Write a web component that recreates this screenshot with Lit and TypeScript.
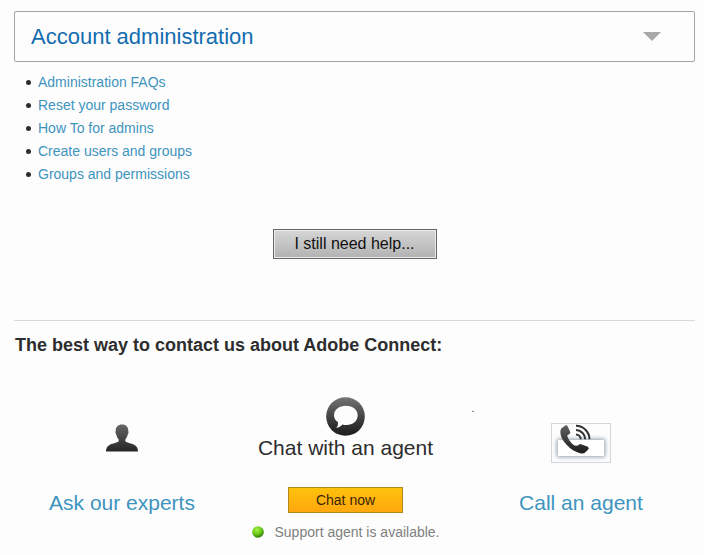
import { LitElement, html, css } from "lit";
import { customElement } from "lit/decorators.js";

const topics = [
  "Administration FAQs",
  "Reset your password",
  "How To for admins",
  "Create users and groups",
  "Groups and permissions",
];

@customElement("app-root")
export class AppRoot extends LitElement {
  static styles = css`
    :host {
      display: block;
      box-sizing: border-box;
      min-height: 100vh;
      padding: 11px 9px 0 14px;
      background: #fdfdfd;
      color: #2d2d2d;
      font-family: "Liberation Sans", Arial, sans-serif;
      font-size: 14px;
    }
    a {
      color: #3d94be;
      text-decoration: none;
    }
    h1,
    h2,
    p,
    ul {
      margin: 0;
      padding: 0;
    }
    .panel-title {
      font-size: 22px;
      font-weight: normal;
    }
    .panel {
      display: flex;
      align-items: center;
      justify-content: space-between;
      box-sizing: border-box;
      width: 100%;
      height: 51px;
      padding: 0 33px 0 16px;
      border: 1px solid #a3a3a3;
      border-radius: 2px;
      background: #fdfdfd;
      color: #136cb0;
      font: inherit;
      text-align: left;
    }
    .arrow {
      display: block;
      width: 18px;
      height: 9px;
    }
    .topics {
      padding: 9px 0 0 12px;
      list-style: none;
    }
    .topics li {
      display: flex;
      align-items: center;
      gap: 7px;
      line-height: 23px;
    }
    .topics li::before {
      content: "";
      width: 5px;
      height: 5px;
      border-radius: 50%;
      background: #2d2d2d;
    }
    .help-row {
      display: flex;
      justify-content: center;
      padding: 43px 0 61px;
      border-bottom: 1px solid #d9d9d9;
    }
    .help {
      width: 164px;
      height: 30px;
      padding: 0;
      border: 1px solid #666;
      background: linear-gradient(#d6d6d6, #b2b2b2);
      box-shadow: inset 0 0 0 1px #ececec;
      color: #111;
      font: 16px "Liberation Sans", Arial, sans-serif;
    }
    .contact-title {
      padding: 12px 0 0 1px;
      font-size: 18px;
      line-height: 24px;
    }
    .ways {
      display: grid;
      grid-template-columns: 216fr 231fr 24px 192fr;
      padding: 40px 18px 0 0;
    }
    .way {
      display: flex;
      flex-direction: column;
      align-items: center;
      white-space: nowrap;
    }
    .way svg {
      display: block;
    }
    .way-name {
      font-size: 21px;
      line-height: 24px;
    }
    .person {
      padding: 27px 0 39px;
    }
    .phone {
      margin: 26px 0 28px;
      border: 1px solid #d0d6dc;
    }
    .mark {
      padding-top: 4px;
      font-size: 10px;
      line-height: 16px;
      text-align: center;
    }
    .chat {
      width: 115px;
      height: 26px;
      margin: 27px 0 9px;
      padding: 0;
      border: 1px solid #b08a1c;
      background: linear-gradient(#ffc20c, #ffa70f);
      color: #3a2408;
      font: 14px "Liberation Sans", Arial, sans-serif;
    }
    .status {
      display: flex;
      align-items: center;
      gap: 11px;
      color: #808080;
      line-height: 20px;
    }
  `;

  render() {
    return html`
      <h1 class="panel-title">
        <button class="panel" type="button" aria-expanded="true">
          Account administration
          <svg class="arrow" viewBox="0 0 18 9" aria-hidden="true">
            <path d="M0 0H18L9 9Z" fill="#a9a9a9" />
          </svg>
        </button>
      </h1>
      <ul class="topics">
        ${topics.map((t) => html`<li><a href="#">${t}</a></li>`)}
      </ul>
      <div class="help-row">
        <button class="help" type="button">I still need help...</button>
      </div>
      <h2 class="contact-title">The best way to contact us about Adobe Connect:</h2>
      <div class="ways">
        <div class="way">
          <svg class="person" width="32" height="28" viewBox="0 0 32 28" aria-hidden="true">
            <defs>
              <linearGradient id="person-fill" x2="0" y2="1">
                <stop offset="0" stop-color="#666" />
                <stop offset="1" stop-color="#252525" />
              </linearGradient>
            </defs>
            <path
              fill="url(#person-fill)"
              d="M16 0.5C20 0.5 22.4 3 22.3 7C22.7 7.4 22.6 9.6 21.7 10.5C21.2 13 20.2 14.3 19.3 15.4V17C20.5 19 25 19 28.5 21C31.2 22.4 32 24.6 32 27.5H0C0 24.6 0.8 22.4 3.5 21C7 19 11.5 19 12.7 17V15.4C11.8 14.3 10.8 13 10.3 10.5C9.4 9.6 9.3 7.4 9.7 7C9.6 3 12 0.5 16 0.5Z"
            />
          </svg>
          <a class="way-name" href="#">Ask our experts</a>
        </div>
        <div class="way">
          <svg width="39" height="39" viewBox="0 0 40 40" aria-hidden="true">
            <defs>
              <linearGradient id="bubble-fill" x2="0" y2="1">
                <stop offset="0" stop-color="#747474" />
                <stop offset="0.6" stop-color="#3b3b3b" />
                <stop offset="1" stop-color="#1d1d1d" />
              </linearGradient>
            </defs>
            <circle cx="20" cy="20" r="19.8" fill="url(#bubble-fill)" />
            <path
              fill="#fdfdfd"
              d="M20.5 9C27.5 9 32.5 13 32.5 18.8C32.5 24.8 27.5 28.8 21 28.8C19.4 28.8 18 28.6 16.8 28.2C15.3 30.1 13.2 31.4 10.6 31.8C12 30.2 12.4 28.2 12.3 25.9C9.6 24.2 8.2 21.8 8.2 18.8C8.2 13 13.5 9 20.5 9Z"
            />
          </svg>
          <p class="way-name">Chat with an agent</p>
          <button class="chat" type="button">Chat now</button>
          <p class="status">
            <svg width="12" height="12" viewBox="0 0 12 12" aria-hidden="true">
              <defs>
                <radialGradient id="online-fill" cx="0.4" cy="0.3" r="0.7">
                  <stop offset="0" stop-color="#a5ee4a" />
                  <stop offset="0.55" stop-color="#6ccb16" />
                  <stop offset="1" stop-color="#2f7a08" />
                </radialGradient>
              </defs>
              <circle cx="6" cy="6" r="5.8" fill="url(#online-fill)" />
            </svg>
            Support agent is available.
          </p>
        </div>
        <div class="mark">.</div>
        <div class="way">
          <svg class="phone" width="58" height="38" viewBox="0 0 58 38" aria-hidden="true">
            <defs>
              <linearGradient id="phone-fill" x2="0" y2="1">
                <stop offset="0" stop-color="#606060" />
                <stop offset="1" stop-color="#1c1c1c" />
              </linearGradient>
              <filter id="glow" x="-20%" y="-50%" width="140%" height="200%">
                <feGaussianBlur stdDeviation="2" />
              </filter>
            </defs>
            <rect x="5" y="15" width="48" height="18" fill="#8f9cab" filter="url(#glow)" />
            <rect x="6" y="16" width="46" height="16" fill="#fff" />
            <path
              fill="url(#phone-fill)"
              d="M13.6 1.2L15.2 1.6L18.4 8.2L18 9.6L15.2 11.4C15.4 14 19.2 19.2 22.4 21.4L25.4 21.8L27.4 20.2L29 20.2L36 22.8L36.8 24.4C35.6 26.6 33.6 27.6 33.2 28.4C32 29.4 30.6 29.6 29 29.4C24 28.4 18.8 25.4 14.6 20.8C10.6 16.4 8 11.4 8.4 7C8.6 5.4 9.4 4 10.6 3.4Z"
            />
            <g fill="none" stroke="#333" stroke-width="2">
              <path d="M24 10.4A5 5 0 0 1 28.8 15.2" />
              <path d="M24 6A9.4 9.4 0 0 1 33.2 15.2" />
              <path d="M24 1.8A13.6 13.6 0 0 1 37.5 15.2" />
            </g>
          </svg>
          <a class="way-name" href="#">Call an agent</a>
        </div>
      </div>
    `;
  }
}
